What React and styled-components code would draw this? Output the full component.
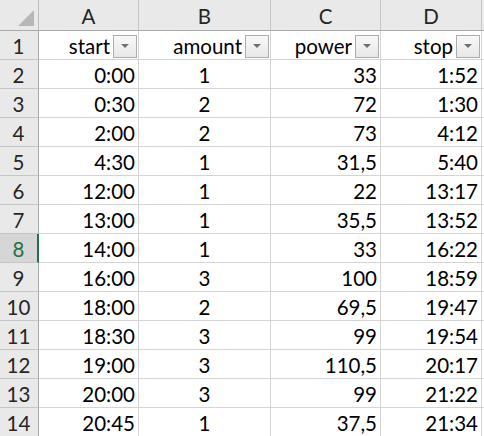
import React from 'react'
import styled, { createGlobalStyle } from 'styled-components'

const GlobalStyle = createGlobalStyle`
  html, body {
    margin: 0;
    padding: 0;
    background: #ffffff;
  }
  body {
    font-family: Lato, "Liberation Sans", sans-serif;
  }
`

const Sheet = styled.div`
  display: grid;
  grid-template-columns: 39px 100px 132px 110px 101px 3px;
  grid-template-rows: 31px repeat(14, 29px);
  width: 484px;
  height: 436px;
  overflow: hidden;
  font-size: 20.5px;
  color: #000;
`

const Corner = styled.div`
  position: relative;
  background: #e9e9e9;
  border-right: 1px solid #bdbdbd;
  border-bottom: 1px solid #a9a9a9;
  box-sizing: border-box;

  &::after {
    content: '';
    position: absolute;
    right: 4px;
    bottom: 4px;
    width: 0;
    height: 0;
    border-left: 16px solid transparent;
    border-bottom: 16px solid #b7b7b7;
  }
`

const ColHead = styled.div`
  display: flex;
  align-items: center;
  justify-content: center;
  background: #e9e9e9;
  border-right: 1px solid ${({ last }) => (last ? 'transparent' : '#c6c6c6')};
  border-bottom: 1px solid #a9a9a9;
  box-sizing: border-box;
  color: #262626;
  padding-top: 2px;
`

const RowHead = styled.div`
  display: flex;
  align-items: center;
  justify-content: center;
  background: ${({ active }) => (active ? '#d6d6d6' : '#e9e9e9')};
  color: ${({ active }) => (active ? '#217346' : '#262626')};
  border-right: ${({ active }) => (active ? '2px solid #217346' : '1px solid #a9a9a9')};
  border-bottom: 1px solid #c6c6c6;
  box-sizing: border-box;
  padding-top: 1px;
  padding-right: ${({ active }) => (active ? '0' : '1px')};
`

const Cell = styled.div`
  display: flex;
  align-items: center;
  justify-content: ${({ align }) => (align === 'center' ? 'center' : 'flex-end')};
  padding: 1px 3px 0 3px;
  border-right: 1px solid #d4d4d4;
  border-bottom: 1px solid #d4d4d4;
  box-sizing: border-box;
  white-space: nowrap;
`

const Filler = styled.div`
  border-bottom: 1px solid #d4d4d4;
  box-sizing: border-box;
`

const HeaderCell = styled.div`
  display: flex;
  align-items: center;
  justify-content: flex-end;
  gap: 3px;
  padding: 1px 0 0 3px;
  border-right: 1px solid #d4d4d4;
  border-bottom: 1px solid #d4d4d4;
  box-sizing: border-box;
  white-space: nowrap;
`

const FilterButton = styled.div`
  width: 24px;
  height: 23px;
  margin-top: 1px;
  margin-right: 1px;
  box-sizing: border-box;
  border: 1px solid #acacac;
  background: linear-gradient(#f8f8f8, #e8e8e8);
  display: flex;
  align-items: center;
  justify-content: center;

  &::after {
    content: '';
    width: 0;
    height: 0;
    border-left: 4px solid transparent;
    border-right: 4px solid transparent;
    border-top: 4px solid #707070;
  }
`

const columns = [
  { letter: 'A', title: 'start', align: 'right' },
  { letter: 'B', title: 'amount', align: 'center' },
  { letter: 'C', title: 'power', align: 'right' },
  { letter: 'D', title: 'stop', align: 'right' },
]

const rows = [
  ['0:00', '1', '33', '1:52'],
  ['0:30', '2', '72', '1:30'],
  ['2:00', '2', '73', '4:12'],
  ['4:30', '1', '31,5', '5:40'],
  ['12:00', '1', '22', '13:17'],
  ['13:00', '1', '35,5', '13:52'],
  ['14:00', '1', '33', '16:22'],
  ['16:00', '3', '100', '18:59'],
  ['18:00', '2', '69,5', '19:47'],
  ['18:30', '3', '99', '19:54'],
  ['19:00', '3', '110,5', '20:17'],
  ['20:00', '3', '99', '21:22'],
  ['20:45', '1', '37,5', '21:34'],
]

function App () {
  return (
    <>
      <GlobalStyle />
      <Sheet>
        <Corner />
        {columns.map((c) => (
          <ColHead key={c.letter}>{c.letter}</ColHead>
        ))}
        <ColHead last />

        <RowHead>1</RowHead>
        {columns.map((c) => (
          <HeaderCell key={c.title}>
            <span>{c.title}</span>
            <FilterButton />
          </HeaderCell>
        ))}
        <Filler />

        {rows.map((r, i) => (
          <React.Fragment key={i}>
            <RowHead active={i + 2 === 8}>{i + 2}</RowHead>
            {r.map((v, j) => (
              <Cell key={j} align={columns[j].align}>{v}</Cell>
            ))}
            <Filler />
          </React.Fragment>
        ))}
      </Sheet>
    </>
  )
}

export default App
